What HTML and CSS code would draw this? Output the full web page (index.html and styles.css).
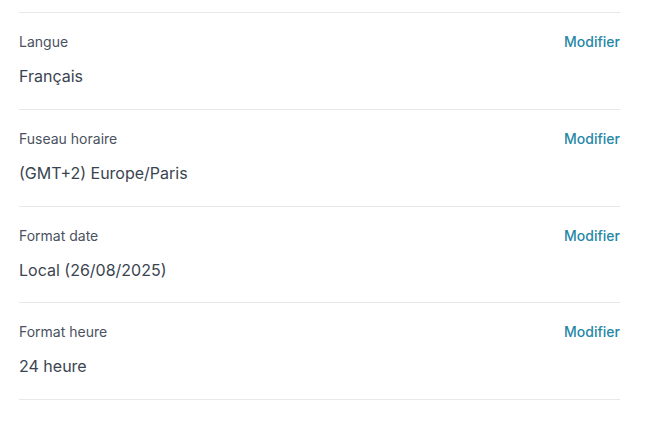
FILE: index.html
```html
<!DOCTYPE html>
<html lang="fr">
<head>
<meta charset="utf-8">
<link rel="stylesheet" href="styles.css">
</head>
<body>
<div class="settings">
  <div class="row">
    <div class="head"><span class="label">Langue</span><a class="edit" href="#">Modifier</a></div>
    <div class="value">Français</div>
  </div>
  <div class="row">
    <div class="head"><span class="label">Fuseau horaire</span><a class="edit" href="#">Modifier</a></div>
    <div class="value">(GMT+2) Europe/Paris</div>
  </div>
  <div class="row">
    <div class="head"><span class="label">Format date</span><a class="edit" href="#">Modifier</a></div>
    <div class="value">Local (26/08/2025)</div>
  </div>
  <div class="row">
    <div class="head"><span class="label">Format heure</span><a class="edit" href="#">Modifier</a></div>
    <div class="value">24 heure</div>
  </div>
</div>
</body>
</html>
```
FILE: styles.css
```css
html, body {
  margin: 0;
  padding: 0;
  background: #ffffff;
}
body {
  font-family: Inter, "Noto Sans", sans-serif;
  padding: 12px 0 0 19px;
}
.settings {
  width: 601px;
  border-top: 1px solid #e8e8e8;
}
.row {
  display: flex;
  flex-direction: column;
  gap: 12px;
  padding: 19px 0 20.75px;
  border-bottom: 1px solid #e8e8e8;
}
.head {
  display: flex;
  justify-content: space-between;
  align-items: center;
  height: 20px;
}
.label {
  font-size: 14px;
  line-height: 20px;
  color: #4a5260;
}
.edit {
  font-size: 14px;
  line-height: 20px;
  font-weight: 500;
  color: #2787a6;
  text-decoration: none;
}
.value {
  font-size: 16px;
  line-height: 24px;
  color: #3a4451;
}
```
